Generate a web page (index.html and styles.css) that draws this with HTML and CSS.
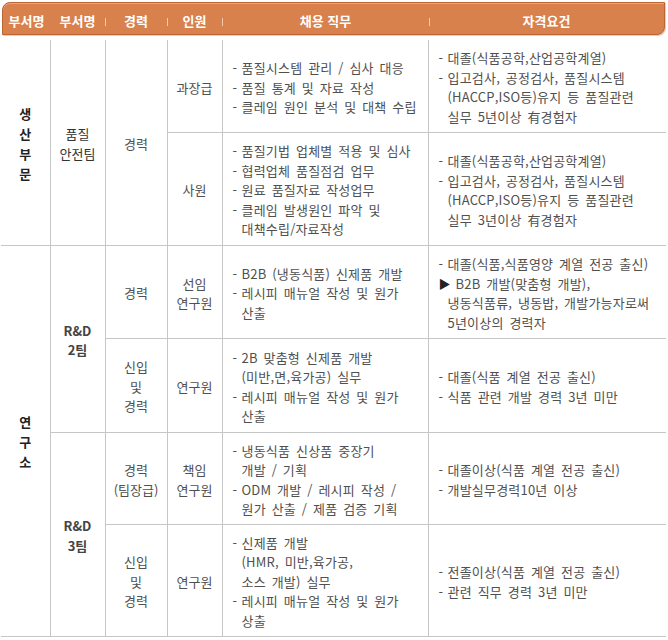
FILE: index.html
```html
<!DOCTYPE html>
<html lang="ko">
<head>
<meta charset="utf-8">
<title>채용 직무</title>
<link rel="stylesheet" href="styles.css">
</head>
<body>
<div class="page">
  <div class="head">
    <div class="hc">부서명</div>
    <div class="hc">부서명</div>
    <div class="hc sep">경력</div>
    <div class="hc sep">인원</div>
    <div class="hc sep">채용 직무</div>
    <div class="hc sep">자격요건</div>
  </div>
  <table class="jobs">
    <colgroup>
      <col class="c1"><col class="c2"><col class="c3"><col class="c4"><col class="c5"><col class="c6">
    </colgroup>
    <tbody>
      <tr class="r1">
        <td rowspan="2" class="div">생<br>산<br>부<br>문</td>
        <td rowspan="2" class="team light">품질<br>안전팀</td>
        <td rowspan="2">경력</td>
        <td>과장급</td>
        <td class="txt"><ul>
          <li>품질시스템 관리 / 심사 대응</li>
          <li>품질 통계 및 자료 작성</li>
          <li>클레임 원인 분석 및 대책 수립</li>
        </ul></td>
        <td class="txt last"><ul>
          <li>대졸(식품공학,산업공학계열)</li>
          <li>입고검사, 공정검사, 품질시스템<br>(HACCP,ISO등)유지 등 품질관련<br>실무 5년이상 有경험자</li>
        </ul></td>
      </tr>
      <tr class="r2">
        <td>사원</td>
        <td class="txt"><ul>
          <li>품질기법 업체별 적용 및 심사</li>
          <li>협력업체 품질점검 업무</li>
          <li>원료 품질자료 작성업무</li>
          <li>클레임 발생원인 파악 및<br>대책수립/자료작성</li>
        </ul></td>
        <td class="txt last"><ul>
          <li>대졸(식품공학,산업공학계열)</li>
          <li>입고검사, 공정검사, 품질시스템<br>(HACCP,ISO등)유지 등 품질관련<br>실무 3년이상 有경험자</li>
        </ul></td>
      </tr>
      <tr class="r3">
        <td rowspan="4" class="div">연<br>구<br>소</td>
        <td rowspan="2" class="team">R&amp;D<br>2팀</td>
        <td>경력</td>
        <td>선임<br>연구원</td>
        <td class="txt"><ul>
          <li>B2B (냉동식품) 신제품 개발</li>
          <li>레시피 매뉴얼 작성 및 원가<br>산출</li>
        </ul></td>
        <td class="txt last"><ul>
          <li>대졸(식품,식품영양 계열 전공 출신)</li>
          <li class="tri">B2B 개발(맞춤형 개발),<br>냉동식품류, 냉동밥, 개발가능자로써<br>5년이상의 경력자</li>
        </ul></td>
      </tr>
      <tr class="r4">
        <td>신입<br>및<br>경력</td>
        <td>연구원</td>
        <td class="txt"><ul>
          <li>2B 맞춤형 신제품 개발<br>(미반,면,육가공) 실무</li>
          <li>레시피 매뉴얼 작성 및 원가<br>산출</li>
        </ul></td>
        <td class="txt last"><ul>
          <li>대졸(식품 계열 전공 출신)</li>
          <li>식품 관련 개발 경력 3년 미만</li>
        </ul></td>
      </tr>
      <tr class="r5">
        <td rowspan="2" class="team">R&amp;D<br>3팀</td>
        <td>경력<br>(팀장급)</td>
        <td>책임<br>연구원</td>
        <td class="txt"><ul>
          <li>냉동식품 신상품 중장기<br>개발 / 기획</li>
          <li>ODM 개발 / 레시피 작성 /<br>원가 산출 / 제품 검증 기획</li>
        </ul></td>
        <td class="txt last"><ul>
          <li>대졸이상(식품 계열 전공 출신)</li>
          <li>개발실무경력10년 이상</li>
        </ul></td>
      </tr>
      <tr class="r6">
        <td>신입<br>및<br>경력</td>
        <td>연구원</td>
        <td class="txt"><ul>
          <li>신제품 개발<br>(HMR, 미반,육가공,<br>소스 개발) 실무</li>
          <li>레시피 매뉴얼 작성 및 원가<br>상출</li>
        </ul></td>
        <td class="txt last"><ul>
          <li>전졸이상(식품 계열 전공 출신)</li>
          <li>관련 직무 경력 3년 미만</li>
        </ul></td>
      </tr>
    </tbody>
  </table>
</div>
</body>
</html>
```

FILE: styles.css
```css
* { box-sizing: border-box; }
html, body { margin: 0; padding: 0; }
body {
  width: 668px;
  height: 640px;
  overflow: hidden;
  background: #fff;
  font-family: "Noto Sans CJK KR", "Noto Sans", sans-serif;
  font-size: 13px;
  color: #505050;
}
.page { padding: 2px 2px 0 1px; }

.head {
  display: grid;
  grid-template-columns: 47px 55px 62px 55px 207px 235px;
  width: 663px;
  height: 33px;
  margin-left: 1px;
  background: #d9814d;
  border: 1px solid #bd6433;
  border-radius: 8px 0 8px 0;
  box-shadow: inset 0 1px 0 #e9a57c, 1px 1px 0 rgba(120, 60, 20, 0.25);
  color: #fff;
  font-weight: bold;
  font-size: 13px;
}
.hc {
  display: flex;
  align-items: center;
  justify-content: center;
  padding-top: 3px;
  white-space: nowrap;
}
.hc.sep {
  background: linear-gradient(#f3c9ae, #f3c9ae) no-repeat left 0 top 15px / 1px 8px;
}

.jobs {
  margin-top: 5px;
  width: 665px;
  table-layout: fixed;
  border-collapse: collapse;
}
.c1 { width: 49px; }
.c2 { width: 55px; }
.c3 { width: 62px; }
.c4 { width: 55px; }
.c5 { width: 206px; }
.c6 { width: 238px; }

.jobs td {
  border: 1px solid #c6c6c6;
  text-align: center;
  vertical-align: middle;
  line-height: 19.5px;
  padding: 3px 0 0 0;
  white-space: nowrap;
}
.jobs tr.r1 td { border-top: none; }
.jobs td.div { border-left: none; }
.jobs td.last { border-right: none; }

.r1 { height: 92px; }
.r2 { height: 113px; }
.r3 { height: 93px; }
.r4 { height: 94px; }
.r5 { height: 92px; }
.r6 { height: 112px; }

.jobs td.div {
  font-weight: bold;
  color: #222;
  line-height: 20px;
}
.team {
  font-weight: bold;
  color: #444;
}
.team.light { font-weight: normal; color: #333; }

.jobs td.txt {
  text-align: left;
  padding-left: 10px;
  word-spacing: 2px;
  letter-spacing: 0.2px;
}
.txt ul { list-style: none; margin: 0; padding: 0; }
.txt li { padding-left: 9px; text-indent: -9px; }
.txt li::before { content: "-"; display: inline-block; width: 9px; text-indent: 0; }
.txt li.tri::before { content: "▶"; width: 17px; color: #222; font-size: 12px; }
```
